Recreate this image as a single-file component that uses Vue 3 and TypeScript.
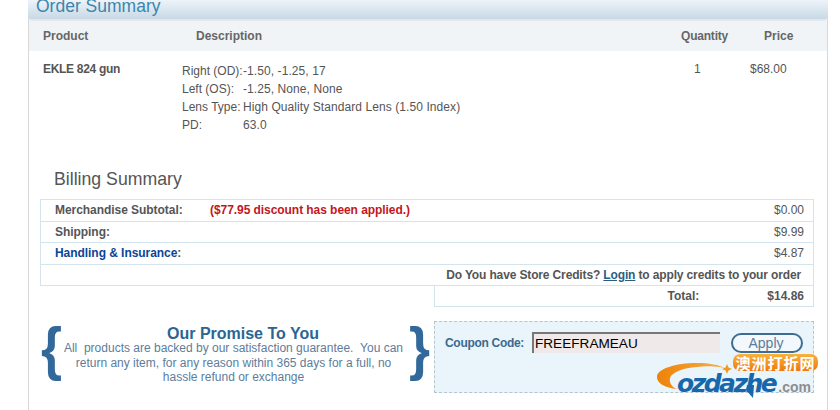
<template>
  <div class="page">
    <div class="panel">
      <div class="panel-head">
        <h2>Order Summary</h2>
      </div>
      <div class="cols">
        <span class="c-product">Product</span>
        <span class="c-desc">Description</span>
        <span class="c-qty">Quantity</span>
        <span class="c-price">Price</span>
      </div>
      <div class="item">
        <div class="c-product item-name">EKLE 824 gun</div>
        <div class="specs">
          <template v-for="s in specs" :key="s.label">
            <span class="spec-label">{{ s.label }}</span>
            <span>{{ s.value }}</span>
          </template>
        </div>
        <div class="item-qty">1</div>
        <div class="item-price">$68.00</div>
      </div>

      <h3 class="billing-title">Billing Summary</h3>
      <div class="billing">
        <div class="row">
          <span class="row-label">Merchandise Subtotal:</span>
          <span class="discount">($77.95 discount has been applied.)</span>
          <span class="amount">$0.00</span>
        </div>
        <div class="row">
          <span class="row-label">Shipping:</span>
          <span class="amount">$9.99</span>
        </div>
        <div class="row">
          <span class="row-label"><span class="blue">Handling &amp; Insurance</span>:</span>
          <span class="amount">$4.87</span>
        </div>
        <div class="row credits">
          Do You have Store Credits?&nbsp;<a href="#" class="login">Login</a>&nbsp;to apply credits to your order
        </div>
      </div>
      <div class="total">
        <span class="total-label">Total:</span>
        <span class="total-value">$14.86</span>
      </div>

      <div class="bottom">
        <div class="promise">
          <span class="brace">{</span>
          <div class="promise-text">
            <h4>Our Promise To You</h4>
            <p>All &nbsp;products are backed by our satisfaction guarantee. &nbsp;You can return any item, for any reason within 365 days for a full, no hassle refund or exchange</p>
          </div>
          <span class="brace">}</span>
        </div>
        <div class="coupon">
          <label class="coupon-label" for="coupon">Coupon Code:</label>
          <input id="coupon" class="coupon-input" type="text" value="FREEFRAMEAU" />
          <button class="apply" type="button">Apply</button>
        </div>
      </div>
    </div>

    <div class="logo">
      <svg class="swoosh" width="110" height="42" viewBox="0 0 110 42">
        <defs>
          <linearGradient id="sw" x1="0" y1="0" x2="1" y2="0">
            <stop offset="0" stop-color="#ee8208" />
            <stop offset="1" stop-color="#f5b04a" />
          </linearGradient>
        </defs>
        <path d="M22 29C10 28 1 23 2 16C3 9 20 3 42 3C54 3 64 5 70 8C60 6 50 6 42 7C28 8 17 12 15 18C14 23 17 27 22 29Z" fill="url(#sw)" />
        <path d="M72 4l1.500 3.500 3.500 1.500-3.500 1.500-1.500 3.500-1.500-3.500-3.500-1.500 3.500-1.500z" fill="#f29a1c" />
        <path d="M92 25L99 25L98 38L91 30Z" fill="#1667ac" />
      </svg>
      <span class="badge">澳洲打折网</span>
      <span class="logo-word">ozdazhe<span class="logo-com">.com</span></span>
    </div>
  </div>
</template>

<script setup lang="ts">
interface Spec {
  label: string
  value: string
}

const specs: Spec[] = [
  { label: 'Right (OD):', value: '-1.50, -1.25, 17' },
  { label: 'Left (OS):', value: '-1.25, None, None' },
  { label: 'Lens Type:', value: 'High Quality Standard Lens (1.50 Index)' },
  { label: 'PD:', value: '63.0' },
]
</script>

<style>
html,
body {
  margin: 0;
  background: #fff;
  overflow: hidden;
}
</style>

<style scoped>
.page {
  position: relative;
  width: 840px;
  height: 410px;
  overflow: hidden;
  font-family: "Liberation Sans", Arial, sans-serif;
  font-size: 12px;
  color: #555;
}

.panel {
  box-sizing: border-box;
  width: 800px;
  height: 410px;
  margin-left: 28px;
  border-left: 1px solid #d8d8d8;
  border-right: 1px solid #d8d8d8;
}

.panel-head {
  height: 19px;
  margin: 0 -1px;
  padding-left: 8px;
  overflow: hidden;
  background: linear-gradient(#edf3f9, #c7d9e6);
  border-bottom: 2px solid #e3e8ec;
  border-radius: 0 0 4px 4px;
}

.panel-head h2 {
  margin: -6px 0 0;
  font-size: 17.500px;
  line-height: 24px;
  font-weight: normal;
  color: #3c86ad;
}

.cols {
  display: flex;
  align-items: center;
  height: 30px;
  background: #f0f4f7;
  font-weight: bold;
  color: #666;
}

.c-product {
  width: 153px;
  padding-left: 14px;
}

.c-desc {
  flex: 1;
}

.c-qty {
  width: 83px;
  letter-spacing: -0.200px;
}

.c-price {
  width: 63px;
}

.item {
  display: flex;
  padding-top: 10px;
  height: 89px;
}

.item-name {
  width: 139px;
  font-weight: bold;
  line-height: 16px;
  letter-spacing: -0.300px;
  white-space: nowrap;
}

.item-qty {
  width: 56px;
  line-height: 16px;
}

.item-price {
  width: 77px;
  line-height: 16px;
}

.specs {
  flex: 1;
  display: grid;
  grid-template-columns: 61px 1fr;
  grid-auto-rows: 18px;
  align-content: start;
  line-height: 18px;
  padding-top: 1px;
  letter-spacing: 0.080px;
}

.spec-label {
  white-space: nowrap;
  letter-spacing: 0;
}

.billing-title {
  margin: 18px 0 0 25px;
  font-size: 17.700px;
  line-height: 22px;
  font-weight: normal;
  color: #555;
}

.billing {
  margin: 9px 13px 0 11px;
  border: 1px solid #d3e4ec;
  border-bottom: 0;
}

.row {
  display: flex;
  align-items: center;
  height: 20.500px;
  padding: 0 9px 0 14px;
  border-bottom: 1px solid #d3e4ec;
}

.row-label {
  width: 155px;
  font-weight: bold;
  letter-spacing: -0.050px;
}

.blue {
  color: #0b4596;
}

.discount {
  font-weight: bold;
  color: #c4161c;
  letter-spacing: -0.060px;
}

.amount {
  margin-left: auto;
}

.credits {
  justify-content: flex-end;
  padding-right: 12px;
  font-weight: bold;
  white-space: nowrap;
  letter-spacing: -0.140px;
}

.login {
  color: #2a5f85;
  text-decoration: underline;
}

.total {
  display: flex;
  align-items: center;
  height: 20px;
  margin: 0 13px 0 405px;
  padding-right: 9px;
  border: 1px solid #d3e4ec;
  border-top: 0;
  font-weight: bold;
}

.total-label {
  margin-left: auto;
  margin-right: 68px;
}

.bottom {
  display: flex;
  align-items: flex-start;
  margin: 14px 13px 0 11px;
}

.promise {
  display: flex;
  width: 390px;
  padding-top: 3px;
  color: #33699a;
}

.brace {
  width: 22px;
  height: 58px;
  margin-top: -4px;
  font-size: 60px;
  line-height: 58px;
  font-weight: bold;
  text-align: center;
  transform: scaleX(0.9);
}

.promise-text {
  flex: 1;
  margin-top: 2px;
  text-align: center;
}

.promise-text h4 {
  margin: 0;
  padding-left: 16px;
  font-size: 16px;
  line-height: 15px;
  font-weight: bold;
  color: #2d6592;
}

.promise-text p {
  margin: 0;
  padding: 0 3px 0 0;
  font-size: 12px;
  line-height: 14.500px;
  color: #5c7d9c;
}

.coupon {
  box-sizing: border-box;
  display: flex;
  align-items: flex-start;
  width: 380px;
  height: 72px;
  margin-left: auto;
  padding: 10px 0 0 10px;
  background: #eaf4fb;
  border: 1px dashed #b4c5d1;
}

.coupon-label {
  width: 87px;
  line-height: 22px;
  font-weight: bold;
  letter-spacing: -0.300px;
  color: #3b6a8f;
}

.coupon-input {
  box-sizing: border-box;
  width: 188px;
  height: 21px;
  padding: 0 0 0 1px;
  border: 0;
  border-top: 2px solid #777;
  border-left: 2px solid #777;
  background: #f0e9e9;
  outline: none;
  font-family: inherit;
  font-size: 13.600px;
  color: #000;
}

.apply {
  box-sizing: border-box;
  width: 72px;
  height: 20px;
  margin: 1px 0 0 11px;
  padding: 0 2px 0 0;
  border: 2px solid #3d6d93;
  border-radius: 10px;
  background: #f2f8fc;
  font-family: inherit;
  font-size: 14px;
  line-height: 14px;
  color: #5b7c9b;
}

.logo {
  position: absolute;
  left: 655px;
  top: 360px;
  width: 165px;
  height: 50px;
}

.swoosh {
  position: absolute;
  left: 0;
  top: 0;
}

.badge {
  position: absolute;
  left: 78px;
  top: -6px;
  width: 85px;
  height: 17px;
  border-radius: 7px;
  background: linear-gradient(#f8b23a, #ec7a12);
  font-family: "Noto Sans CJK SC", sans-serif;
  font-size: 15px;
  font-weight: bold;
  line-height: 17px;
  letter-spacing: 1px;
  text-align: center;
  color: #fff;
}

.logo-word {
  position: absolute;
  left: 22px;
  top: 13px;
  font-family: "DejaVu Sans", sans-serif;
  font-size: 25px;
  font-weight: bold;
  font-style: italic;
  line-height: 22px;
  letter-spacing: -2.500px;
  white-space: nowrap;
  color: #1667ac;
}

.logo-com {
  margin-left: 3px;
  font-family: "Liberation Sans", sans-serif;
  font-size: 14px;
  font-style: normal;
  letter-spacing: 0;
  color: #8d8d8d;
}
</style>
